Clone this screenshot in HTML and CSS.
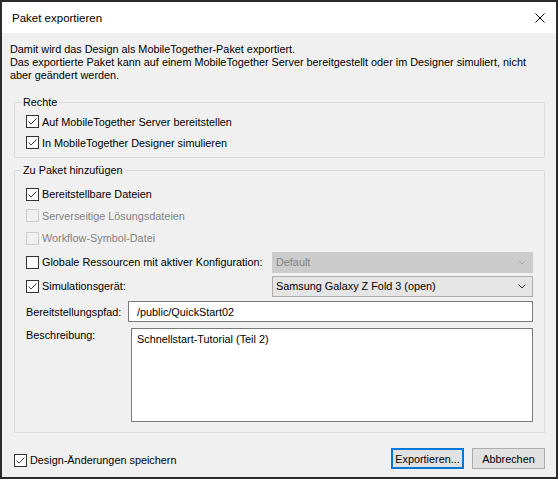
FILE: index.html
```html
<!DOCTYPE html>
<html lang="de">
<head>
<meta charset="utf-8">
<title>Paket exportieren</title>
<link rel="stylesheet" href="styles.css">
</head>
<body>
<div class="window">
  <div class="titlebar">
    <span class="title">Paket exportieren</span>
    <svg class="close" width="10" height="10" viewBox="0 0 10 10"><path d="M0.5 0.5 L9.5 9.5 M9.5 0.5 L0.5 9.5" stroke="#000" stroke-width="1" fill="none"/></svg>
  </div>
  <div class="client">
    <p class="intro">Damit wird das Design als MobileTogether-Paket exportiert.<br>Das exportierte Paket kann auf einem MobileTogether Server bereitgestellt oder im Designer simuliert, nicht<br>aber geändert werden.</p>

    <fieldset class="group g-rechte">
      <legend>Rechte</legend>
      <div class="row h21">
        <svg class="cb" width="13" height="13" viewBox="0 0 13 13"><rect x="0.5" y="0.5" width="12" height="12" fill="#fff" stroke="#333"/><polyline points="2.5,6.5 5,9 10.5,3.5" fill="none" stroke="#444"/></svg>
        <span>Auf MobileTogether Server bereitstellen</span>
      </div>
      <div class="row h21">
        <svg class="cb" width="13" height="13" viewBox="0 0 13 13"><rect x="0.5" y="0.5" width="12" height="12" fill="#fff" stroke="#333"/><polyline points="2.5,6.5 5,9 10.5,3.5" fill="none" stroke="#444"/></svg>
        <span>In MobileTogether Designer simulieren</span>
      </div>
    </fieldset>

    <fieldset class="group g-paket">
      <legend>Zu Paket hinzufügen</legend>
      <div class="row h22">
        <svg class="cb" width="13" height="13" viewBox="0 0 13 13"><rect x="0.5" y="0.5" width="12" height="12" fill="#fff" stroke="#333"/><polyline points="2.5,6.5 5,9 10.5,3.5" fill="none" stroke="#444"/></svg>
        <span>Bereitstellbare Dateien</span>
      </div>
      <div class="row h21 disabled">
        <svg class="cb" width="13" height="13" viewBox="0 0 13 13"><rect x="0.5" y="0.5" width="12" height="12" fill="none" stroke="#cccccc"/></svg>
        <span>Serverseitige Lösungsdateien</span>
      </div>
      <div class="row h24 disabled">
        <svg class="cb" width="13" height="13" viewBox="0 0 13 13"><rect x="0.5" y="0.5" width="12" height="12" fill="none" stroke="#cccccc"/></svg>
        <span>Workflow-Symbol-Datei</span>
      </div>
      <div class="row h24">
        <svg class="cb" width="13" height="13" viewBox="0 0 13 13"><rect x="0.5" y="0.5" width="12" height="12" fill="#fff" stroke="#333"/></svg>
        <span>Globale Ressourcen mit aktiver Konfiguration:</span>
        <div class="select select-disabled">
          <span>Default</span>
          <svg width="8" height="5" viewBox="0 0 8 5"><polyline points="0.5,0.5 4,4 7.5,0.5" fill="none" stroke="#a8a8a8"/></svg>
        </div>
      </div>
      <div class="row h24">
        <svg class="cb" width="13" height="13" viewBox="0 0 13 13"><rect x="0.5" y="0.5" width="12" height="12" fill="#fff" stroke="#333"/><polyline points="2.5,6.5 5,9 10.5,3.5" fill="none" stroke="#444"/></svg>
        <span>Simulationsgerät:</span>
        <div class="select">
          <span>Samsung Galaxy Z Fold 3 (open)</span>
          <svg width="8" height="5" viewBox="0 0 8 5"><polyline points="0.5,0.5 4,4 7.5,0.5" fill="none" stroke="#333"/></svg>
        </div>
      </div>
      <div class="row field-row">
        <span class="field-label">Bereitstellungspfad:</span>
        <div class="textbox">/public/QuickStart02</div>
      </div>
      <div class="row area-row">
        <span class="field-label area-label">Beschreibung:</span>
        <div class="textarea">Schnellstart-Tutorial (Teil 2)</div>
      </div>
    </fieldset>

    <div class="footer">
      <div class="footer-check">
        <svg class="cb" width="13" height="13" viewBox="0 0 13 13"><rect x="0.5" y="0.5" width="12" height="12" fill="#fff" stroke="#333"/><polyline points="2.5,6.5 5,9 10.5,3.5" fill="none" stroke="#444"/></svg>
        <span>Design-Änderungen speichern</span>
      </div>
      <div class="buttons">
        <button class="btn btn-default">Exportieren...</button>
        <button class="btn">Abbrechen</button>
      </div>
    </div>
  </div>
</div>
</body>
</html>
```

FILE: styles.css
```css
* { box-sizing: border-box; }

body {
  margin: 0;
  background: #ffffff;
  font-family: "Liberation Sans", Arial, sans-serif;
  font-size: 10.85px;
  color: #000000;
}

.window {
  width: 558px;
  height: 479px;
  border: 2px solid #2b2b2b;
  background: #f0f0f0;
  display: flex;
  flex-direction: column;
}

.titlebar {
  height: 31px;
  flex: none;
  background: #ffffff;
  display: flex;
  align-items: center;
  justify-content: space-between;
  padding: 0 11px 0 10px;
  font-size: 11.5px;
}

.close { display: block; }

.client {
  flex: 1;
  display: flex;
  flex-direction: column;
  padding: 10px 11px 8px 12px;
}

.intro {
  margin: 0 0 0 -4px;
  line-height: 13px;
  white-space: nowrap;
}

.group {
  margin: 14px 0 0;
  padding: 2px 11px 4px 6px;
  border: 1px solid #dcdcdc;
  min-width: 0;
}

.group legend {
  padding: 0 2px;
  line-height: 13px;
}

.g-paket {
  margin-top: 6px;
  padding-top: 6px;
  padding-bottom: 10px;
}

.row {
  display: flex;
  align-items: center;
  gap: 3px;
  margin-left: 5px;
  white-space: nowrap;
}

.h21 { height: 21px; }
.h22 { height: 22px; }
.h24 { height: 24px; }

.cb { display: block; flex: none; }

.disabled { color: #838383; }

.select {
  margin-left: auto;
  width: 261px;
  height: 21px;
  display: flex;
  align-items: center;
  justify-content: space-between;
  padding: 0 6px 0 3px;
  border: 1px solid #adadad;
  background: #e5e5e5;
}

.select svg { display: block; }

.select-disabled {
  background: #cccccc;
  border-color: #cccccc;
  color: #838383;
}

.field-row {
  margin-top: 3px;
  gap: 0;
}

.field-label {
  width: 102px;
  flex: none;
}

.textbox {
  flex: 1;
  height: 21px;
  display: flex;
  align-items: center;
  padding-left: 8px;
  border: 1px solid #7a7a7a;
  background: #ffffff;
}

.area-row {
  margin-top: 6px;
  align-items: flex-start;
  gap: 0;
}

.area-label {
  width: 105px;
  padding-top: 1px;
  line-height: 13px;
}

.textarea {
  flex: 1;
  height: 94px;
  padding: 4px 5px;
  line-height: 13px;
  border: 1px solid #7a7a7a;
  background: #ffffff;
}

.footer {
  margin-top: auto;
  height: 21px;
  display: flex;
  align-items: center;
  justify-content: space-between;
}

.footer-check {
  display: flex;
  align-items: center;
  gap: 3px;
  padding-top: 3px;
}

.buttons {
  display: flex;
  gap: 8px;
}

.btn {
  width: 73px;
  height: 21px;
  padding: 0;
  margin: 0;
  font: inherit;
  color: #000000;
  background: #e1e1e1;
  border: 1px solid #adadad;
  border-radius: 0;
}

.btn-default {
  border: 2px solid #0078d7;
}
```
